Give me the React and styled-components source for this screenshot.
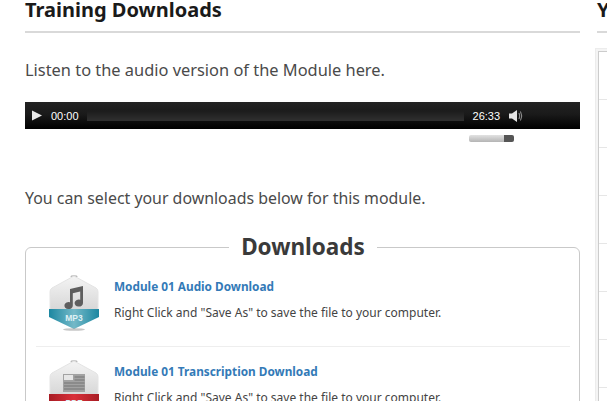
import React from 'react'
import styled, { createGlobalStyle } from 'styled-components'

const GlobalStyle = createGlobalStyle`
  html, body {
    margin: 0;
    padding: 0;
    height: 401px;
    overflow: hidden;
    background: #fff;
    font-family: "Noto Sans", Lato, sans-serif;
  }
`

const downloads = [
  { id: 'audio', title: 'Module 01 Audio Download', badge: 'MP3', kind: 'audio' },
  { id: 'transcript', title: 'Module 01 Transcription Download', badge: 'PDF', kind: 'pdf' },
]

function FileBadge({ kind, label }) {
  const isAudio = kind === 'audio'
  const dark = isAudio ? '#1c87a1' : '#a81c24'
  const light = isAudio ? '#74b9c8' : '#d9303a'
  return (
    <svg width="54" height="58" viewBox="0 0 54 58">
      <defs>
        <linearGradient id={`body-${kind}`} x1="0" y1="0" x2="0" y2="1">
          <stop offset="0" stopColor="#f4f4f4" />
          <stop offset="1" stopColor="#d6d6d6" />
        </linearGradient>
        <linearGradient id={`band-${kind}`} x1="0" y1="0" x2="1" y2="0">
          <stop offset="0" stopColor={dark} />
          <stop offset="0.5" stopColor={light} />
          <stop offset="1" stopColor={dark} />
        </linearGradient>
      </defs>
      <ellipse cx="26" cy="1.6" rx="3.5" ry="1.4" fill="#b5b5b5" />
      <path d="M26 1 L48 13 Q50 14 50 17 V36 H2 V17 Q2 14 4 13 Z" fill={`url(#body-${kind})`} stroke="#e4e4e4" />
      <path d="M1 34 H51 V42 L26 54 L1 42 Z" fill={`url(#band-${kind})`} />
      <ellipse cx="26" cy="54.5" rx="11" ry="1.3" fill="#8f8f8f" opacity="0.5" />
      {isAudio ? (
        <path
          d="M22 14 L35 11 V28 A4.2 3.5 0 1 1 32.2 24.8 V16.5 L24.8 18.2 V30.5 A4.2 3.5 0 1 1 22 27.3 Z"
          fill="#5e5e5e"
        />
      ) : (
        <g>
          <rect x="15" y="14" width="22" height="18" fill="#a2a2a2" />
          <rect x="16" y="15" width="9" height="5" fill="#e6e6e6" />
          <path d="M26.5 17 H36.5 M26.5 20 H36.5 M16 23 H36.5 M16 26 H36.5 M16 29 H36.5" stroke="#757575" strokeWidth="1" />
        </g>
      )}
      <text
        x="26"
        y="46"
        textAnchor="middle"
        fontFamily="Liberation Sans, sans-serif"
        fontWeight="700"
        fontSize="8.5"
        fill="#dff0f4"
      >
        {label}
      </text>
    </svg>
  )
}

export default function App() {
  return (
    <Page>
      <GlobalStyle />
      <Main>
        <SectionTitle>Training Downloads</SectionTitle>
        <Lead $size={16.4}>Listen to the audio version of the Module here.</Lead>
        <Player>
          <PlayButton viewBox="0 0 11 11">
            <path d="M0 0 L11 5.5 L0 11 Z" fill="#e8e8e8" />
          </PlayButton>
          <Time>00:00</Time>
          <Rail />
          <Time>26:33</Time>
          <VolumeIcon viewBox="0 0 14 14">
            <path d="M0 4.5 H3 L8 1 V13 L3 9.5 H0 Z" fill="#e4e4e4" />
            <path d="M10 4 Q11.5 7 10 10 M11.5 2.5 Q14 7 11.5 11.5" stroke="#999" strokeWidth="1" fill="none" />
          </VolumeIcon>
          <VolumeSlider />
        </Player>
        <Lead $top={57} $size={15.9}>You can select your downloads below for this module.</Lead>
        <DownloadBox>
          <BoxLegend>Downloads</BoxLegend>
          {downloads.map((item) => (
            <DownloadRow key={item.id}>
              <FileBadge kind={item.kind} label={item.badge} />
              <RowText>
                <RowTitle href="#">{item.title}</RowTitle>
                <RowNote>Right Click and "Save As" to save the file to your computer.</RowNote>
              </RowText>
            </DownloadRow>
          ))}
        </DownloadBox>
      </Main>
      <Sidebar>
        <SectionTitle>Your</SectionTitle>
        <SideBox>
          <SideInner>
            {Array.from({ length: 8 }, (_, i) => (
              <SideRow key={i} />
            ))}
          </SideInner>
        </SideBox>
      </Sidebar>
    </Page>
  )
}

const Page = styled.div`
  display: flex;
  gap: 17px;
  width: 607px;
  height: 401px;
  padding-left: 25px;
  box-sizing: border-box;
  overflow: hidden;
`

const Main = styled.div`
  flex: 0 0 555px;
  width: 555px;
`

const Sidebar = styled.div`
  flex: 0 0 200px;
  width: 200px;
`

const SectionTitle = styled.h2`
  margin: 0;
  height: 31px;
  border-bottom: 2px solid #d9d9d9;
  font-size: 20px;
  line-height: 20px;
  font-weight: 700;
  color: #1a1a1a;
`

const Lead = styled.p`
  margin: ${(p) => p.$top || 25}px 0 0;
  font-size: ${(p) => p.$size}px;
  line-height: 24px;
  color: #4a4a4a;
`

const Player = styled.div`
  position: relative;
  display: flex;
  align-items: center;
  height: 27px;
  margin-top: 20px;
  padding: 0 0 0 7px;
  background: linear-gradient(#232323 0%, #1a1a1a 45%, #000 100%);
`

const PlayButton = styled.svg`
  width: 10px;
  height: 11px;
  flex: none;
`

const Time = styled.span`
  flex: none;
  margin-left: 9px;
  font-family: "Liberation Sans", sans-serif;
  font-size: 11px;
  color: #fff;
`

const Rail = styled.div`
  flex: none;
  width: 377px;
  height: 10px;
  margin: 0 0 0 8px;
  background: linear-gradient(#1c1c1c, #303030);
`

const VolumeIcon = styled.svg`
  flex: none;
  width: 14px;
  height: 14px;
  margin-left: 9px;
`

const VolumeSlider = styled.div`
  position: absolute;
  top: 33px;
  left: 444px;
  width: 45px;
  height: 7px;
  border-radius: 2px;
  background:
    linear-gradient(90deg, transparent 78%, #555 78%),
    linear-gradient(#e2e2e2, #b4b4b4);
`

const DownloadBox = styled.fieldset`
  margin: 22px 0 0;
  padding: 0 9px 0 10px;
  border: 1px solid #c9c9c9;
  border-radius: 6px;
  min-width: 0;
`

const BoxLegend = styled.legend`
  margin: 0 auto;
  padding: 0 12px;
  font-size: 22.5px;
  line-height: 30px;
  font-weight: 700;
  color: #3a3a3a;
`

const DownloadRow = styled.div`
  display: flex;
  align-items: flex-start;
  gap: 12px;
  height: 71px;
  padding: 13px 0 0 12px;
  border-bottom: 1px solid #eee;
`

const RowText = styled.div`
  display: flex;
  flex-direction: column;
  gap: 11px;
  padding-top: 3px;
`

const RowTitle = styled.a`
  font-size: 11.8px;
  line-height: 16px;
  font-weight: 700;
  color: #337ab7;
  text-decoration: none;
`

const RowNote = styled.span`
  font-size: 12px;
  line-height: 16px;
  color: #444;
`

const SideBox = styled.div`
  margin: 15px 0 0 -2px;
  padding: 2px;
  background: #f4f4f4;
  border: 1px solid #ececec;
`

const SideInner = styled.div`
  border: 1px solid #ccc;
  background: #fff;
`

const SideRow = styled.div`
  height: 47px;
  border-bottom: 1px solid #e6e6e6;
`
